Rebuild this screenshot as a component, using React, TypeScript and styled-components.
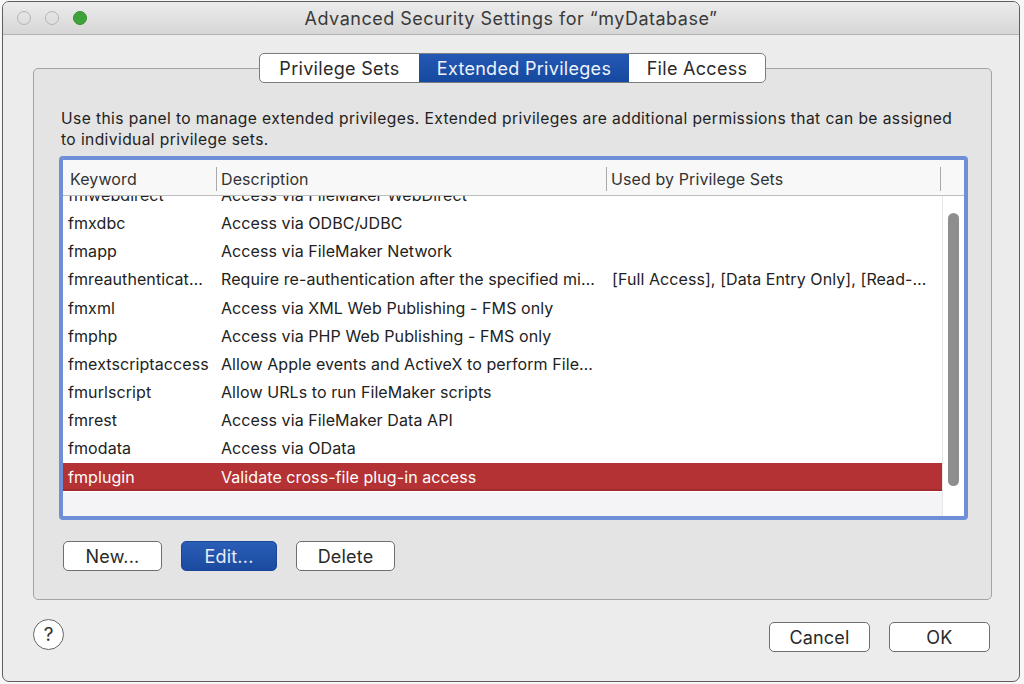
import { FC } from 'react';
import styled, { createGlobalStyle, css } from 'styled-components';

const GlobalStyle = createGlobalStyle`
  html, body {
    margin: 0;
    padding: 0;
    background: #f7f7f7;
  }
  body {
    font-family: Inter, "Noto Sans", "Liberation Sans", sans-serif;
    color: #222;
    -webkit-font-smoothing: antialiased;
  }
`;

const Window = styled.div`
  box-sizing: border-box;
  width: 1018px;
  height: 681px;
  margin: 1px 0 0 2px;
  border: 1px solid #5e5e5e;
  border-radius: 7px;
  background: #ececec;
  overflow: hidden;
  display: flex;
  flex-direction: column;
`;

const TitleBar = styled.div`
  height: 32px;
  flex: none;
  display: grid;
  grid-template-columns: 1fr auto 1fr;
  align-items: center;
  padding: 0 14px;
  background: linear-gradient(#ececec, #d6d6d6);
  border-bottom: 1px solid #b3b3b3;
`;

const Lights = styled.div`
  display: flex;
  gap: 14px;
`;

const Light = styled.span<{ $active?: boolean }>`
  box-sizing: border-box;
  width: 14px;
  height: 14px;
  border-radius: 50%;
  ${p => p.$active
    ? css`
        background: #3ea23a;
        border: 1px solid #34912f;
      `
    : css`
        background: transparent;
        border: 1px solid #b4b4b4;
      `}
`;

const Title = styled.div`
  font-size: 18px;
  letter-spacing: 0.5px;
  color: #3a3a3a;
  white-space: nowrap;
`;

const Body = styled.div`
  flex: 1;
  display: flex;
  flex-direction: column;
  padding: 18px 27px 0 30px;
`;

const TabBar = styled.div`
  align-self: center;
  position: relative;
  z-index: 1;
  display: flex;
  height: 30px;
  box-sizing: border-box;
  border: 1px solid #7c7c7c;
  border-radius: 5px;
  background: #fff;
  overflow: hidden;
`;

const Tab = styled.div<{ $selected?: boolean; $width: number }>`
  width: ${p => p.$width}px;
  display: flex;
  align-items: center;
  justify-content: center;
  font-size: 18px;
  letter-spacing: 0.3px;
  color: ${p => (p.$selected ? '#eef3fb' : '#2a2a2a')};
  background: ${p => (p.$selected ? 'linear-gradient(#2358b4, #164a9f)' : 'transparent')};
`;

const GroupBox = styled.div`
  margin-top: -15px;
  height: 532px;
  box-sizing: border-box;
  display: flex;
  flex-direction: column;
  padding: 39px 23px 0 25px;
  border: 1px solid #a4a4a4;
  border-radius: 5px;
  background: #e4e4e4;
`;

const Intro = styled.p`
  margin: 0 0 6px;
  padding-left: 2px;
  font-size: 15.6px;
  letter-spacing: 0.4px;
  line-height: 21px;
  color: #222;
`;

const TableFrame = styled.div`
  height: 364px;
  box-sizing: border-box;
  display: flex;
  flex-direction: column;
  border: 4px solid #6e8fd8;
  border-radius: 4px;
  background: #fff;
  overflow: hidden;
`;

const HeaderRow = styled.div`
  height: 36px;
  flex: none;
  display: flex;
  box-sizing: border-box;
  padding-top: 2px;
  background: #f8f8f8;
  border-bottom: 1px solid #bdbdbd;
`;

const HeaderCell = styled.div<{ $width: number; $divider?: boolean }>`
  position: relative;
  width: ${p => p.$width}px;
  flex: none;
  display: flex;
  align-items: center;
  box-sizing: border-box;
  padding-left: ${p => (p.$divider ? 5 : 7)}px;
  font-size: 16px;
  letter-spacing: 0.1px;
  color: #333;

  ${p => p.$divider && css`
    &::before {
      content: '';
      position: absolute;
      left: 0;
      top: 5px;
      bottom: 4px;
      width: 1px;
      background: #aaa;
    }
  `}
`;

const Viewport = styled.div`
  flex: 1;
  display: flex;
  overflow: hidden;
`;

const RowList = styled.div`
  flex: 1;
  margin-top: -15.3px;
`;

const Row = styled.div<{ $selected?: boolean }>`
  height: 28.2px;
  display: flex;
  align-items: center;
  font-size: 16px;
  letter-spacing: 0.08px;
  white-space: nowrap;
  color: ${p => (p.$selected ? '#fff' : '#222')};
  background: ${p => (p.$selected ? '#b53234' : 'transparent')};
  ${p => p.$selected && css`
    box-shadow: inset 0 -2px 0 #a02a2c;
  `}
`;

const FillerRow = styled.div`
  height: 24px;
  margin-top: 1px;
  background: #f4f4f6;
`;

const Cell = styled.div<{ $width: number; $pad: number }>`
  width: ${p => p.$width}px;
  flex: none;
  box-sizing: border-box;
  padding-left: ${p => p.$pad}px;
  overflow: hidden;
`;

const ScrollTrack = styled.div`
  width: 22px;
  flex: none;
  box-sizing: border-box;
  border-left: 1px solid #e6e6e6;
  padding: 17px 5px 0 5px;
`;

const Thumb = styled.div`
  height: 273px;
  border-radius: 6px;
  background: #8e8e8e;
`;

const ButtonRow = styled.div`
  display: flex;
  gap: 19px;
  margin: 21px 0 0 4px;
`;

const PushButton = styled.button<{ $primary?: boolean; $width: number }>`
  width: ${p => p.$width}px;
  height: 30px;
  box-sizing: border-box;
  border-radius: 5px;
  font-family: inherit;
  font-size: 18px;
  letter-spacing: 0.2px;
  padding: 0;
  ${p => p.$primary
    ? css`
        border: 1px solid #1a4696;
        background: linear-gradient(#2a5db6, #1a4ba0);
        color: #e6edf8;
      `
    : css`
        border: 1px solid #6f6f6f;
        background: #fff;
        color: #2a2a2a;
      `}
`;

const Footer = styled.div`
  display: flex;
  align-items: center;
  margin: 22px 2px 0 0;
`;

const HelpButton = styled.button`
  width: 31px;
  height: 31px;
  box-sizing: border-box;
  border-radius: 50%;
  border: 1px solid #666;
  background: #fff;
  color: #333;
  font-family: inherit;
  font-size: 19px;
  padding: 0;
  margin-top: -5px;
`;

const FooterActions = styled.div`
  margin-left: auto;
  display: flex;
  gap: 19px;
`;

interface Privilege {
  keyword: string;
  description: string;
  usedBy?: string;
}

const privileges: Privilege[] = [
  { keyword: 'fmwebdirect', description: 'Access via FileMaker WebDirect' },
  { keyword: 'fmxdbc', description: 'Access via ODBC/JDBC' },
  { keyword: 'fmapp', description: 'Access via FileMaker Network' },
  {
    keyword: 'fmreauthenticat…',
    description: 'Require re-authentication after the specified mi…',
    usedBy: '[Full Access], [Data Entry Only], [Read-…',
  },
  { keyword: 'fmxml', description: 'Access via XML Web Publishing - FMS only' },
  { keyword: 'fmphp', description: 'Access via PHP Web Publishing - FMS only' },
  { keyword: 'fmextscriptaccess', description: 'Allow Apple events and ActiveX to perform File…' },
  { keyword: 'fmurlscript', description: 'Allow URLs to run FileMaker scripts' },
  { keyword: 'fmrest', description: 'Access via FileMaker Data API' },
  { keyword: 'fmodata', description: 'Access via OData' },
  { keyword: 'fmplugin', description: 'Validate cross-file plug-in access' },
];

const SELECTED = 'fmplugin';

const App: FC = () => {
  return (
    <>
      <GlobalStyle />
      <Window>
        <TitleBar>
          <Lights>
            <Light />
            <Light />
            <Light $active />
          </Lights>
          <Title>Advanced Security Settings for “myDatabase”</Title>
          <span />
        </TitleBar>

        <Body>
          <TabBar>
            <Tab $width={159}>Privilege Sets</Tab>
            <Tab $width={210} $selected>Extended Privileges</Tab>
            <Tab $width={136}>File Access</Tab>
          </TabBar>

          <GroupBox>
            <Intro>
              Use this panel to manage extended privileges. Extended privileges are additional permissions that can be assigned
              to individual privilege sets.
            </Intro>

            <TableFrame>
              <HeaderRow>
                <HeaderCell $width={153}>Keyword</HeaderCell>
                <HeaderCell $width={390} $divider>Description</HeaderCell>
                <HeaderCell $width={334} $divider>Used by Privilege Sets</HeaderCell>
                <HeaderCell $width={23} $divider />
              </HeaderRow>
              <Viewport>
                <RowList>
                  {privileges.map(p => (
                    <Row key={p.keyword} $selected={p.keyword === SELECTED}>
                      <Cell $width={153} $pad={5}>{p.keyword}</Cell>
                      <Cell $width={390} $pad={5}>{p.description}</Cell>
                      <Cell $width={335} $pad={6}>{p.usedBy}</Cell>
                    </Row>
                  ))}
                  <FillerRow />
                </RowList>
                <ScrollTrack>
                  <Thumb />
                </ScrollTrack>
              </Viewport>
            </TableFrame>

            <ButtonRow>
              <PushButton $width={99}>New...</PushButton>
              <PushButton $width={96} $primary>Edit...</PushButton>
              <PushButton $width={99}>Delete</PushButton>
            </ButtonRow>
          </GroupBox>

          <Footer>
            <HelpButton>?</HelpButton>
            <FooterActions>
              <PushButton $width={101}>Cancel</PushButton>
              <PushButton $width={101}>OK</PushButton>
            </FooterActions>
          </Footer>
        </Body>
      </Window>
    </>
  );
};

export default App;
